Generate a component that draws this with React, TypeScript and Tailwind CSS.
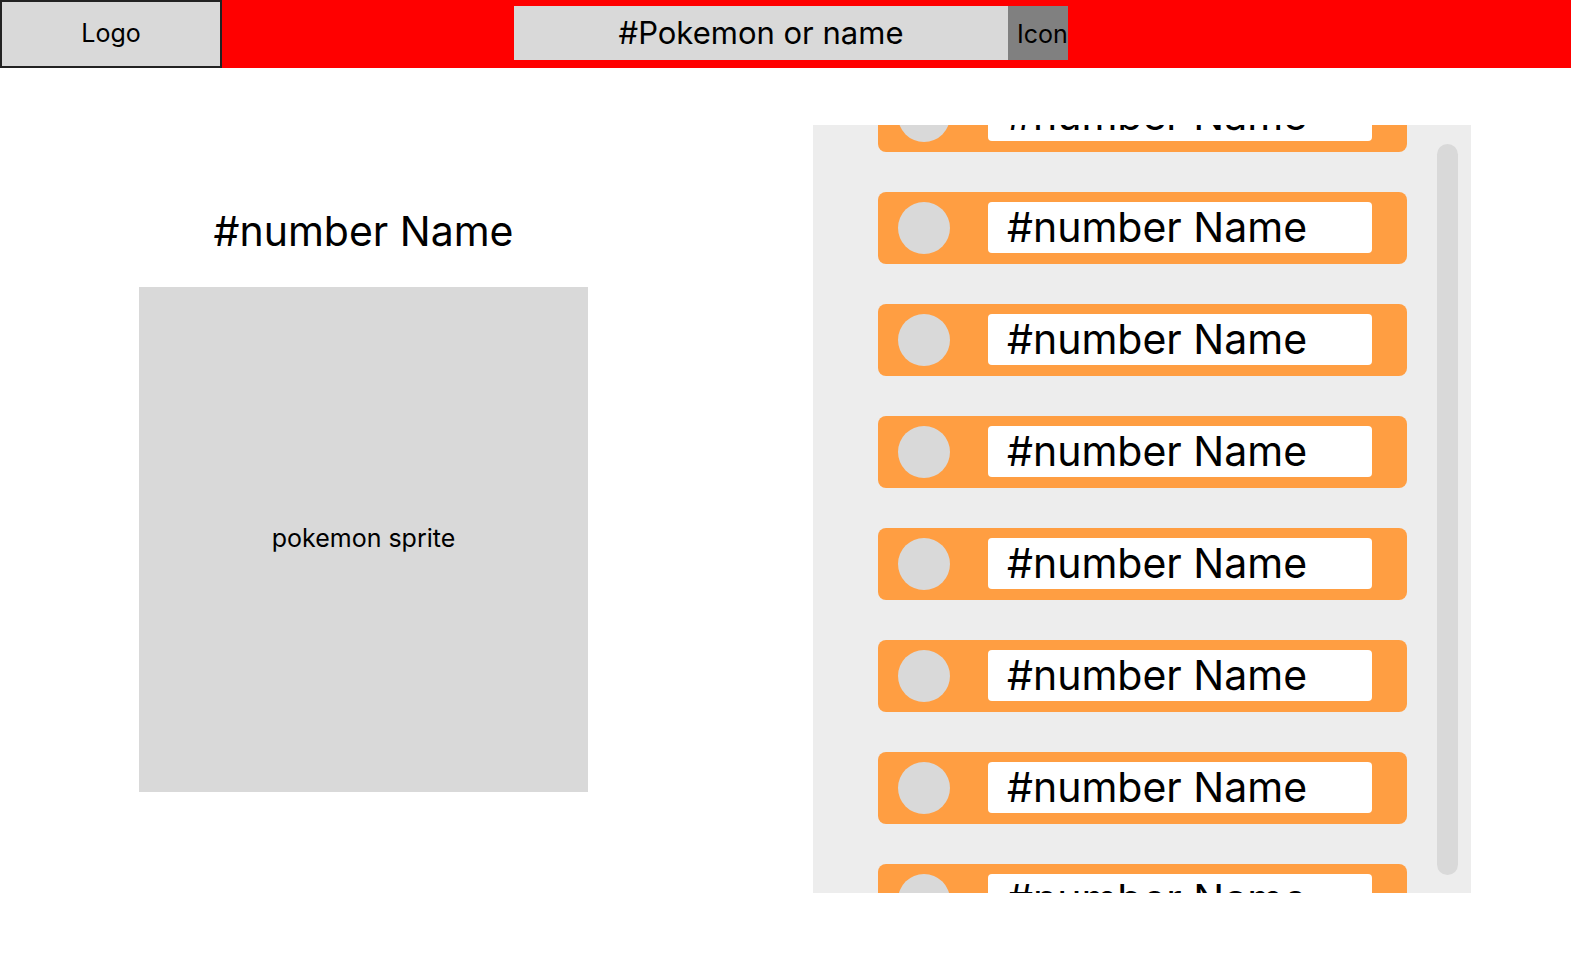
import React from 'react'

const items = Array.from({ length: 8 }, (_, i) => i)

export default function App() {
  return (
    <div className="w-[1571px] h-[955px] bg-white font-['Inter',sans-serif] text-black overflow-hidden">
      {/* header */}
      <header className="h-[68px] bg-[#ff0000] flex items-start">
        <div className="w-[222px] h-[68px] bg-[#d9d9d9] border-2 border-[#222] flex items-center justify-center text-[25px]">
          Logo
        </div>
        <div className="ml-[292px] mt-[6px] flex h-[54px]">
          <div className="w-[494px] bg-[#d9d9d9] flex items-center justify-center text-[31px]">
            #Pokemon or name
          </div>
          <div className="w-[60px] bg-[#808080] flex items-center pl-[9px] pt-[3px] text-[25px] overflow-hidden whitespace-nowrap">
            Icon
          </div>
        </div>
      </header>

      <main className="flex items-start">
        {/* selected pokemon */}
        <section className="ml-[139px] w-[449px] mt-[139px] flex flex-col items-center">
          <h1 className="text-[41px] leading-[48px]">#number Name</h1>
          <div className="mt-[32px] w-[449px] h-[505px] bg-[#d9d9d9] flex items-center justify-center text-[25px] pb-[2px]">
            pokemon sprite
          </div>
        </section>

        {/* list */}
        <section className="ml-[225px] mt-[57px] w-[658px] h-[768px] bg-[#ededed] flex">
          <div className="flex-1 overflow-hidden">
            <div className="mt-[-45px] pl-[65px] flex flex-col gap-[40px]">
              {items.map(i => (
                <div
                  key={i}
                  className="w-[529px] h-[72px] rounded-[8px] bg-[#ff9e42] flex items-start pt-[10px] pl-[20px]"
                >
                  <div className="w-[52px] h-[52px] rounded-full bg-[#d9d9d9]" />
                  <div className="ml-[38px] w-[384px] h-[51px] rounded-[4px] bg-white flex items-center pl-[19px] text-[41px] leading-none">
                    #number Name
                  </div>
                </div>
              ))}
            </div>
          </div>
          <div className="w-[21px] mt-[19px] mb-[18px] mr-[13px] ml-[30px] rounded-full bg-[#d9d9d9]" />
        </section>
      </main>
    </div>
  )
}
